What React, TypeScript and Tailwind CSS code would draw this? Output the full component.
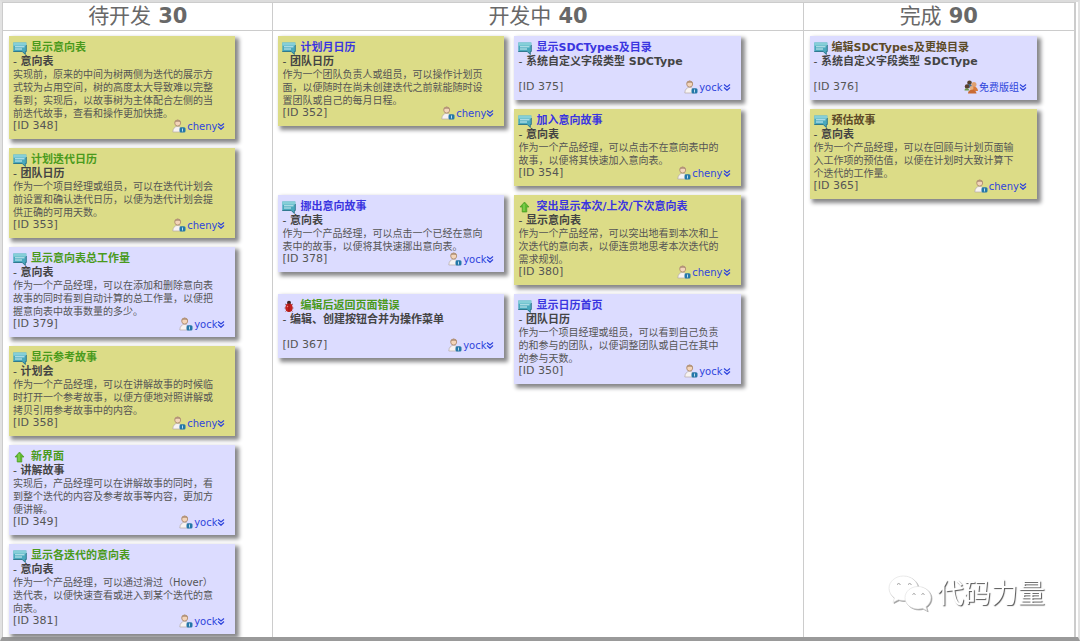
type IconKind = 'story' | 'improve' | 'bug';

interface Story {
  id: number;
  title: string;
  parent: string;
  lines: string[];
  owner: string;
  kind?: IconKind;
  group?: boolean;
  tone: 'yellow' | 'lavender';
  link: 'green' | 'blue' | 'brown';
}

const todo: Story[] = [
  { id: 348, title: '显示意向表', parent: '意向表', owner: 'cheny', tone: 'yellow', link: 'green', lines: ['实现前，原来的中间为树两侧为迭代的展示方', '式较为占用空间，树的高度太大导致难以完整', '看到；实现后，以故事树为主体配合左侧的当', '前迭代故事，查看和操作更加快捷。'] },
  { id: 353, title: '计划迭代日历', parent: '团队日历', owner: 'cheny', tone: 'yellow', link: 'green', lines: ['作为一个项目经理或组员，可以在迭代计划会', '前设置和确认迭代日历，以便为迭代计划会提', '供正确的可用天数。'] },
  { id: 379, title: '显示意向表总工作量', parent: '意向表', owner: 'yock', tone: 'lavender', link: 'green', lines: ['作为一个产品经理，可以在添加和删除意向表', '故事的同时看到自动计算的总工作量，以便把', '握意向表中故事数量的多少。'] },
  { id: 358, title: '显示参考故事', parent: '计划会', owner: 'cheny', tone: 'yellow', link: 'green', lines: ['作为一个产品经理，可以在讲解故事的时候临', '时打开一个参考故事，以便方便地对照讲解或', '拷贝引用参考故事中的内容。'] },
  { id: 349, title: '新界面', parent: '讲解故事', owner: 'yock', kind: 'improve', tone: 'lavender', link: 'green', lines: ['实现后，产品经理可以在讲解故事的同时，看', '到整个迭代的内容及参考故事等内容，更加方', '便讲解。'] },
  { id: 381, title: '显示各迭代的意向表', parent: '意向表', owner: 'yock', tone: 'lavender', link: 'green', lines: ['作为一个产品经理，可以通过滑过（Hover）', '迭代表，以便快速查看或进入到某个迭代的意', '向表。'] },
];

const doing: Story[] = [
  { id: 352, title: '计划月日历', parent: '团队日历', owner: 'cheny', tone: 'yellow', link: 'blue', lines: ['作为一个团队负责人或组员，可以操作计划页', '面，以便随时在尚未创建迭代之前就能随时设', '置团队或自己的每月日程。'] },
  { id: 375, title: '显示SDCTypes及目录', parent: '系统自定义字段类型 SDCType', owner: 'yock', tone: 'lavender', link: 'blue', lines: [] },
  { id: 354, title: '加入意向故事', parent: '意向表', owner: 'cheny', tone: 'yellow', link: 'blue', lines: ['作为一个产品经理，可以点击不在意向表中的', '故事，以便将其快速加入意向表。'] },
  { id: 378, title: '挪出意向故事', parent: '意向表', owner: 'yock', tone: 'lavender', link: 'blue', lines: ['作为一个产品经理，可以点击一个已经在意向', '表中的故事，以便将其快速挪出意向表。'] },
  { id: 380, title: '突出显示本次/上次/下次意向表', parent: '显示意向表', owner: 'cheny', kind: 'improve', tone: 'yellow', link: 'blue', lines: ['作为一个产品经常，可以突出地看到本次和上', '次迭代的意向表，以便连贯地思考本次迭代的', '需求规划。'] },
  { id: 367, title: '编辑后返回页面错误', parent: '编辑、创建按钮合并为操作菜单', owner: 'yock', kind: 'bug', tone: 'lavender', link: 'green', lines: [] },
  { id: 350, title: '显示日历首页', parent: '团队日历', owner: 'yock', tone: 'lavender', link: 'blue', lines: ['作为一个项目经理或组员，可以看到自己负责', '的和参与的团队，以便调整团队或自己在其中', '的参与天数。'] },
];

const done: Story[] = [
  { id: 376, title: '编辑SDCTypes及更换目录', parent: '系统自定义字段类型 SDCType', owner: '免费版组', group: true, tone: 'lavender', link: 'brown', lines: [] },
  { id: 365, title: '预估故事', parent: '意向表', owner: 'cheny', tone: 'yellow', link: 'brown', lines: ['作为一个产品经理，可以在回顾与计划页面输', '入工作项的预估值，以便在计划时大致计算下', '个迭代的工作量。'] },
];

const linkColor = {
  green: 'text-[#4a9a1c]',
  blue: 'text-[#3a35e0]',
  brown: 'text-[#5c4a28]',
};

function KindIcon({ kind = 'story' }: { kind?: IconKind }) {
  if (kind === 'improve') {
    return (
      <svg viewBox="0 0 14 14" className="h-[14px] w-[14px] shrink-0">
        <path d="M6.500 2 11 7H8.800v5H4.200V7H2z" fill="#5fb82e" stroke="#4a9c22" strokeWidth=".7" strokeLinejoin="round" />
        <path d="M6 4v7" stroke="#86d455" strokeWidth="1.300" />
      </svg>
    );
  }
  if (kind === 'bug') {
    return (
      <svg viewBox="0 0 14 14" className="h-[14px] w-[14px] shrink-0">
        <path d="M3 5l2 1M11 5 9 6M2.500 9H5M11.500 9H9M3.500 12.500 5 11M10.500 12.500 9 11" stroke="#6b2a2a" strokeWidth=".7" />
        <circle cx="7" cy="3.700" r="2" fill="#3a2626" />
        <ellipse cx="7" cy="8.700" rx="3.600" ry="4.300" fill="#c4201c" />
        <path d="M7 5v8" stroke="#7e1010" strokeWidth=".6" />
        <circle cx="5.500" cy="7.500" r=".7" fill="#f0857d" />
      </svg>
    );
  }
  return (
    <svg viewBox="0 0 14 14" className="h-[14px] w-[14px] shrink-0">
      <path d="M.3 1.500h13v9.300h-1v2.700L9.300 10.800H.3z" fill="#4aa9bd" />
      <path d="M.3 1.500h13v3.200H.3z" fill="#86cfd8" />
      <path d="M2 5.800h9.500M2 8h7" stroke="#d3f1f5" strokeWidth="1" />
      <path d="M.3 10.500h9l3 3v-3h1V4" fill="none" stroke="#2a7288" strokeWidth=".9" />
    </svg>
  );
}

function OwnerIcon({ group }: { group?: boolean }) {
  if (group) {
    return (
      <svg viewBox="0 0 14 14" className="h-[14px] w-[14px] shrink-0">
        <circle cx="5.500" cy="2.800" r="2.300" fill="#54402c" />
        <path d="M1.500 8c0-5 7-5 7.500 0z" fill="#3f6f9c" />
        <circle cx="3" cy="6.500" r="2.200" fill="#5a4030" />
        <circle cx="10" cy="4.500" r="2.500" fill="#e0a070" />
        <path d="M6.500 11c0-6 7-6 7.500 0z" fill="#d97a3a" />
        <circle cx="7.500" cy="8" r="2" fill="#e8b080" />
        <path d="M4 13.500c0-5 8-5 8.500 0z" fill="#c96a34" />
        <path d="M.5 10.500c0-3 4-3 5 0z" fill="#6f9a4c" />
      </svg>
    );
  }
  return (
    <svg viewBox="0 0 14 14" className="h-[14px] w-[14px] shrink-0">
      <path d="M.8 13c0-7.500 9.500-7.500 9.500 0z" fill="#f7f3f2" stroke="#b5aaa8" strokeWidth=".7" />
      <circle cx="5.700" cy="4" r="3" fill="#f4d5ba" stroke="#b08e70" strokeWidth=".9" />
      <path d="M2.600 3.600C2.500-.2 8.900-.2 8.800 3.600 7.500 2.300 4 2.300 2.600 3.600z" fill="#b3947a" />
      <rect x="7.500" y="8.300" width="6" height="5.200" rx="1.500" fill="#2477a8" />
      <path d="M10.500 9.500v3" stroke="#cfe8f5" strokeWidth=".9" />
    </svg>
  );
}

function StoryCard({ story, className = '' }: { story: Story; className?: string }) {
  const bg = story.tone === 'yellow' ? 'bg-[#dcdc87]' : 'bg-[#dcdcff]';
  return (
    <article className={`${bg} ${className} px-1 pt-[5px] pb-[7px] shadow-[3px_3px_4px_1px_#88888a]`}>
      <h3 className="flex h-[14px] items-center gap-1 text-[11px] font-bold whitespace-nowrap">
        <KindIcon kind={story.kind} />
        <a href={`#story-${story.id}`} className={linkColor[story.link]}>{story.title}</a>
      </h3>
      <p className="text-[11px] leading-[13px] whitespace-nowrap text-[#444]">
        - <b>{story.parent}</b>
      </p>
      <p className="min-h-[13px] text-[10px] leading-[13px] whitespace-nowrap text-[#555]">
        {story.lines.map((line) => (
          <span key={line} className="block">{line}</span>
        ))}
      </p>
      <div className="flex h-3 items-center justify-between pr-[6px] text-[11px] text-[#555]">
        <span>[ID {story.id}]</span>
        <button type="button" className="flex items-center text-[10px] text-[#2f45dc]">
          <OwnerIcon group={story.group} />
          <span className="ml-px">{story.owner}</span>
          <svg viewBox="0 0 8 8" className="h-2 w-2" fill="none" stroke="currentColor" strokeWidth="1.200">
            <path d="M1 1.500l3 2.500L7 1.500M1 4.500l3 2.800L7 4.500" />
          </svg>
        </button>
      </div>
    </article>
  );
}

function ColumnTitle({ name, count }: { name: string; count: number }) {
  return (
    <h2 className="flex h-7 items-center justify-center gap-[7px] border-b border-[#ccc] pt-px text-[21px] text-[#686868]">
      {name} <span className="font-bold">{count}</span>
    </h2>
  );
}

function ChatLogo() {
  return (
    <svg viewBox="0 0 44 38" className="h-[38px] w-[44px] drop-shadow-[1px_1px_0px_#999]" fill="#fff" stroke="#ddd" strokeWidth=".6">
      <path d="M15.500 1C7.400 1 1 6.500 1 13.300c0 3.900 2.100 7.300 5.400 9.600L5 27.500l5.300-2.700c1.700.4 3.400.7 5.200.7C23.600 25.500 30 20 30 13.300S23.600 1 15.500 1z" />
      <path d="M30 11.500c-7.200 0-13 5-13 11.300S22.800 34 30 34c1.600 0 3.100-.2 4.500-.7l4.700 2.500-1.300-4.100c3.100-2.100 5.100-5.300 5.100-8.900 0-6.300-5.800-11.300-13-11.300z" />
      <path d="M9 9.500q1.500-2 3.500 0M20 9.500q1.500-2 3.500 0M24.500 19.500q1.300-2 3 0M33.500 19.500q1.300-2 3 0" fill="none" stroke="#999" strokeWidth="1" />
    </svg>
  );
}

export default function App() {
  return (
    <div className="flex min-h-screen flex-col border-x-2 border-t-2 border-b-4 border-x-[#e2e2e2] border-t-[#dcdcdc] border-b-[#9a9a9a] bg-white font-['DejaVu_Sans','Noto_Sans_CJK_SC',sans-serif]">
      <main className="mr-[2px] grid grow grid-cols-[271fr_531fr_271fr] border-x border-t border-r-2 border-[#ccc]">
        <section className="border-r border-[#ccc]">
          <ColumnTitle name="待开发" count={30} />
          <div className="flex flex-col gap-[9px] pt-[5px] pr-[37px] pb-[3px] pl-[6px]">
            {todo.map((story) => <StoryCard key={story.id} story={story} />)}
          </div>
        </section>

        <section className="border-r border-[#ccc]">
          <ColumnTitle name="开发中" count={40} />
          <div className="grid grid-cols-2 items-start gap-x-[10px] gap-y-[9px] pt-[5px] pr-[62px] pl-[5px]">
            {doing.map((story, i) => (
              <StoryCard key={story.id} story={story} className={i === 0 ? 'row-span-2' : ''} />
            ))}
          </div>
        </section>

        <section>
          <ColumnTitle name="完成" count={90} />
          <div className="flex flex-col gap-[9px] pt-[5px] pr-[37px] pl-[6px]">
            {done.map((story) => <StoryCard key={story.id} story={story} />)}
          </div>
        </section>
      </main>

      {/* Watermark */}
      <div className="fixed right-[35px] bottom-[27px] flex items-center gap-[5px] text-[27px] leading-[40px] text-white [text-shadow:1px_1px_1px_#555]">
        <ChatLogo />
        <span>代码力量</span>
      </div>
    </div>
  );
}
